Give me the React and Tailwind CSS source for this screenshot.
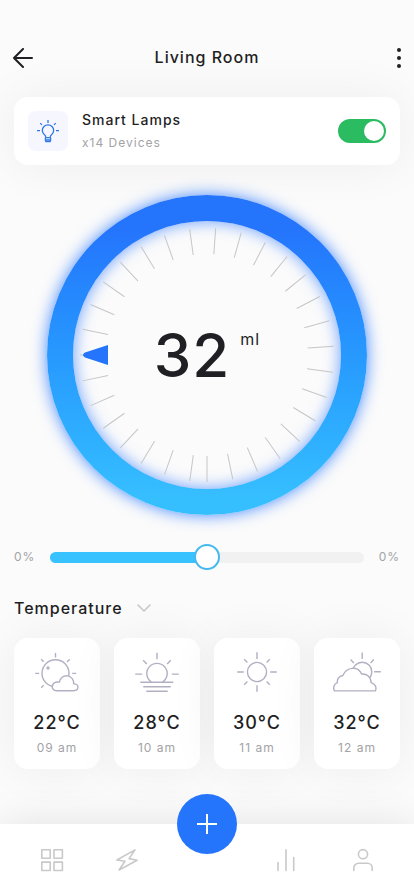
import React, { useState } from 'react';

const TICK_COUNT = 31;
const TICK_STEP = 11.74;

const ArrowLeftIcon = () => (
	<svg
		viewBox="0 0 22 20"
		className="h-5 w-[22px] fill-none stroke-current stroke-2"
		strokeLinecap="round"
		strokeLinejoin="round"
	>
		<path d="M20 10H2M11 1L2 10l9 9" />
	</svg>
);

const DotsIcon = () => (
	<svg viewBox="0 0 4 20" className="h-5 w-1 fill-current">
		<circle cx="2" cy="2" r="2" />
		<circle cx="2" cy="10" r="2" />
		<circle cx="2" cy="18" r="2" />
	</svg>
);

const BulbIcon = () => (
	<svg
		viewBox="0 0 24 24"
		className="size-6 fill-none stroke-[#2f76e6]"
		strokeWidth="1.3"
		strokeLinejoin="round"
	>
		<path d="M9.6 18.6v-1.3c0-1.2-3.3-2.4-3.3-5.8a5.7 5.7 0 0 1 11.4 0c0 3.4-3.3 4.6-3.3 5.8v1.3M9.4 18.7h5.2M9.4 18.7v2.6l.6 1.4h4l.6-1.4v-2.6M9.4 21h5.2" />
		<path d="M12 1v3M4.2 4.1L6 5.9M19.8 4.1L18 5.9M1 11.7h3M20 11.7h3" />
	</svg>
);

const PartlyCloudyIcon = () => (
	<>
		<circle cx="22.5" cy="23.3" r="13.5" />
		<circle cx="15" cy="18" r="1" />
		<path d="M22.5 3v4.5M8.2 9.2l2.5 2.5M36.7 9.2l-2.6 2.7M2.2 23.4h4M39.2 23.4h4M8.2 37.7l2.5-2.4" />
		<path
			className="fill-white"
			d="M23.5 40.7c-6.2 0-5.8-9.6 2.9-8.6a7.2 7.2 0 1 1 14.3 1.8c5.3-.3 5.6 6.2 1.2 6.6-2 .3-5 .2-8 .2z"
		/>
	</>
);

const SunriseIcon = () => (
	<>
		<path d="M18.4 32.1a10.2 10.2 0 1 1 11.2 0" />
		<path d="M24 2.7v6.6M2.2 24.1h7M38.8 24.1h7M10.2 10.3l3.6 3.6M37.8 10.3l-3.6 3.6" />
		<path d="M7.3 32.3h33M10.2 36.7h27.5M13.3 41.3h21.4" />
	</>
);

const SunIcon = () => (
	<>
		<circle cx="24" cy="22" r="9.6" />
		<path d="M24 2.3v6.6M24 35.2v6.6M4.2 22h6.6M37.2 22h6.6M11.2 9.2l3.2 3.2M36.8 9.2l-3.2 3.2M11.2 34.8l3.2-3.2M36.8 34.8l-3.2-3.2" />
	</>
);

const CloudyIcon = () => (
	<>
		<circle cx="29.2" cy="21.9" r="9.6" />
		<path d="M29.2 2.5V9M17.6 9.6l3.2 3.4M40.8 9.6L37.6 13M41.2 21.8h6.6" />
		<path
			className="fill-white"
			d="M1.4 40.9c-1.7-3.6-.2-7 3-8.2-.4-3 1-6.8 5.5-7.2 3.6-8.8 15-9.8 18.7-1.5 5-.6 9.4 3 9.5 8.6 4.2 1.3 5.8 4.6 4.3 8.3z"
		/>
	</>
);

const temperatures = [
	{ degree: '22°C', hour: '09 am', Icon: PartlyCloudyIcon },
	{ degree: '28°C', hour: '10 am', Icon: SunriseIcon },
	{ degree: '30°C', hour: '11 am', Icon: SunIcon },
	{ degree: '32°C', hour: '12 am', Icon: CloudyIcon },
];

const navItems = [
	{
		label: 'Dashboard',
		shape: (
			<path d="M1.8 1.8h8.4v8.4H1.8zM14 1.8h8.4v8.4H14zM1.8 14.1h8.4v8.4H1.8zM14 14.1h8.4v8.4H14z" />
		),
	},
	{
		label: 'Energy',
		shape: <path d="M20 1.9L1.9 12l8 1.3L4.1 22l18-9.8-8-1.6z" />,
	},
	{
		label: 'Statistics',
		shape: <path d="M4 14.5v8M12 1.8v20.7M19.7 9.5v13" />,
	},
	{
		label: 'Profile',
		shape: (
			<>
				<circle cx="12" cy="6.2" r="4.6" />
				<path d="M2.8 22.4V20a4.8 4.8 0 0 1 4.8-4.8h8.8a4.8 4.8 0 0 1 4.8 4.8v2.4" />
			</>
		),
	},
];

const Header = () => (
	<header className="flex h-5 items-start justify-between px-3">
		<button aria-label="Back" className="w-6">
			<ArrowLeftIcon />
		</button>
		<h1 className="text-base leading-[18px] font-medium tracking-[1px]">
			Living Room
		</h1>
		<button aria-label="More" className="flex w-6 justify-end pr-px">
			<DotsIcon />
		</button>
	</header>
);

const DeviceCard = () => {
	const [isOn, setIsOn] = useState(true);

	return (
		<div className="mx-3.5 mt-[29px] flex items-center gap-3.5 rounded-[14px] bg-white p-3.5 shadow-[0_0_50px_rgba(0,0,0,0.06)]">
			<div className="flex size-10 items-center justify-center rounded-lg bg-[#f6f6ff]">
				<BulbIcon />
			</div>
			<label htmlFor="lamps" className="flex-1">
				<span className="block text-sm leading-4 font-medium tracking-[1px]">
					Smart Lamps
				</span>
				<span className="mt-[7px] block text-xs leading-4 tracking-[1px] text-[#a3a3a6]">
					x14 Devices
				</span>
			</label>
			<input
				id="lamps"
				type="checkbox"
				role="switch"
				checked={isOn}
				onChange={() => setIsOn((prevState) => !prevState)}
				className="h-6 w-12 appearance-none rounded-full bg-gray-300 p-0.5 before:block before:size-5 before:rounded-full before:bg-white before:transition-all checked:bg-[#2bbb60] checked:before:translate-x-6"
			/>
		</div>
	);
};

const Dial = () => (
	<div className="mx-auto mt-[30px] size-80 rounded-full bg-linear-to-b from-[#2574fc] from-10% to-[#36bfff] to-95% p-[26px] shadow-[0_0_16px_rgba(37,116,255,0.85)]">
		<div className="relative flex size-full items-center justify-center rounded-full bg-[#fbfbfb] shadow-[inset_0_0_16px_rgba(37,116,255,0.7)]">
			<svg viewBox="-134 -134 268 268" className="absolute inset-0 size-full">
				{Array.from({ length: TICK_COUNT }, (_, i) => (
					<line
						key={i}
						y1="101"
						y2="127"
						stroke="#c6c6c6"
						transform={`rotate(${-i * TICK_STEP})`}
					/>
				))}
				<path
					d="M-99-10v20l-23-7.5q-4-2.5 0-5z"
					className="fill-[#2574fc]"
				/>
			</svg>
			<p className="relative flex items-start gap-2.5 text-6xl font-medium tracking-[1px]">
				32
				<span className="mt-0.5 text-base leading-6 font-normal">ml</span>
			</p>
		</div>
	</div>
);

const LevelSlider = () => {
	const [level, setLevel] = useState(50);

	return (
		<div className="mx-3.5 mt-[29px] flex items-center justify-between text-xs tracking-[1px] text-[#a3a3a6]">
			<span className="w-9">0%</span>
			<input
				type="range"
				aria-label="Level"
				value={level}
				onChange={(e) => setLevel(Number(e.target.value))}
				style={{ '--level': `${level}%` }}
				className="h-[26px] min-w-0 flex-1 appearance-none bg-transparent [&::-webkit-slider-runnable-track]:h-[11px] [&::-webkit-slider-runnable-track]:rounded-full [&::-webkit-slider-runnable-track]:bg-[linear-gradient(to_right,#38c2ff_var(--level),#f1f1f1_var(--level))] [&::-webkit-slider-thumb]:-mt-2 [&::-webkit-slider-thumb]:size-[26px] [&::-webkit-slider-thumb]:appearance-none [&::-webkit-slider-thumb]:rounded-full [&::-webkit-slider-thumb]:border-2 [&::-webkit-slider-thumb]:border-solid [&::-webkit-slider-thumb]:border-[#45b9ef] [&::-webkit-slider-thumb]:bg-white"
			/>
			<span className="w-9 text-right">0%</span>
		</div>
	);
};

const TemperatureCard = ({ item }) => (
	<div className="flex flex-1 flex-col items-center rounded-[14px] bg-white pt-3 pb-[13px] shadow-[0_0_50px_rgba(0,0,0,0.06)]">
		<svg
			viewBox="0 0 48 44"
			className="h-11 w-12 fill-none stroke-[#b3afc2]"
			strokeWidth="1.4"
			strokeLinejoin="round"
		>
			<item.Icon />
		</svg>
		<p className="mt-[17px] text-lg leading-6 font-medium tracking-[1px]">
			{item.degree}
		</p>
		<p className="mt-[5px] text-xs leading-4 tracking-[1px] text-[#a3a3a6]">
			{item.hour}
		</p>
	</div>
);

const NavButton = ({ item }) => (
	<button aria-label={item.label}>
		<svg
			viewBox="0 0 24 24"
			className="size-6 fill-none stroke-[#c9c9c9]"
			strokeWidth="1.6"
			strokeLinecap="round"
			strokeLinejoin="round"
		>
			{item.shape}
		</svg>
	</button>
);

const BottomNav = () => (
	<nav className="relative mt-auto flex h-[72px] items-center justify-between bg-white pr-[39px] pl-10 shadow-[0_0_40px_rgba(0,0,0,0.1)]">
		<div className="flex gap-[51px]">
			{navItems.slice(0, 2).map((item) => (
				<NavButton key={item.label} item={item} />
			))}
		</div>
		<button
			aria-label="Add"
			className="absolute -top-[30px] left-1/2 flex size-15 -translate-x-1/2 items-center justify-center rounded-full bg-[#2574fc]"
		>
			<svg viewBox="0 0 20 20" className="size-5 stroke-white stroke-2">
				<path d="M10 0v20M0 10h20" />
			</svg>
		</button>
		<div className="flex gap-[53px]">
			{navItems.slice(2).map((item) => (
				<NavButton key={item.label} item={item} />
			))}
		</div>
	</nav>
);

const App = () => {
	return (
		<div className="flex min-h-screen flex-col overflow-hidden bg-[#fbfbfb] pt-12 font-['Inter','Liberation_Sans',sans-serif] text-[#1f1f24]">
			<Header />
			<main className="pb-10">
				<DeviceCard />
				<Dial />
				<LevelSlider />
				<button className="mx-3.5 mt-[26px] flex items-center gap-3.5">
					<span className="text-base leading-6 font-medium tracking-[1px]">
						Temperature
					</span>
					<svg
						viewBox="0 0 14 8"
						className="h-2 w-3.5 fill-none stroke-[#c9c9c9]"
						strokeWidth="1.6"
						strokeLinecap="round"
						strokeLinejoin="round"
					>
						<path d="M1 1l6 6 6-6" />
					</svg>
				</button>
				<div className="mx-3.5 mt-[18px] flex gap-3.5">
					{temperatures.map((item) => (
						<TemperatureCard key={item.hour} item={item} />
					))}
				</div>
			</main>
			<BottomNav />
		</div>
	);
};

export default App;
